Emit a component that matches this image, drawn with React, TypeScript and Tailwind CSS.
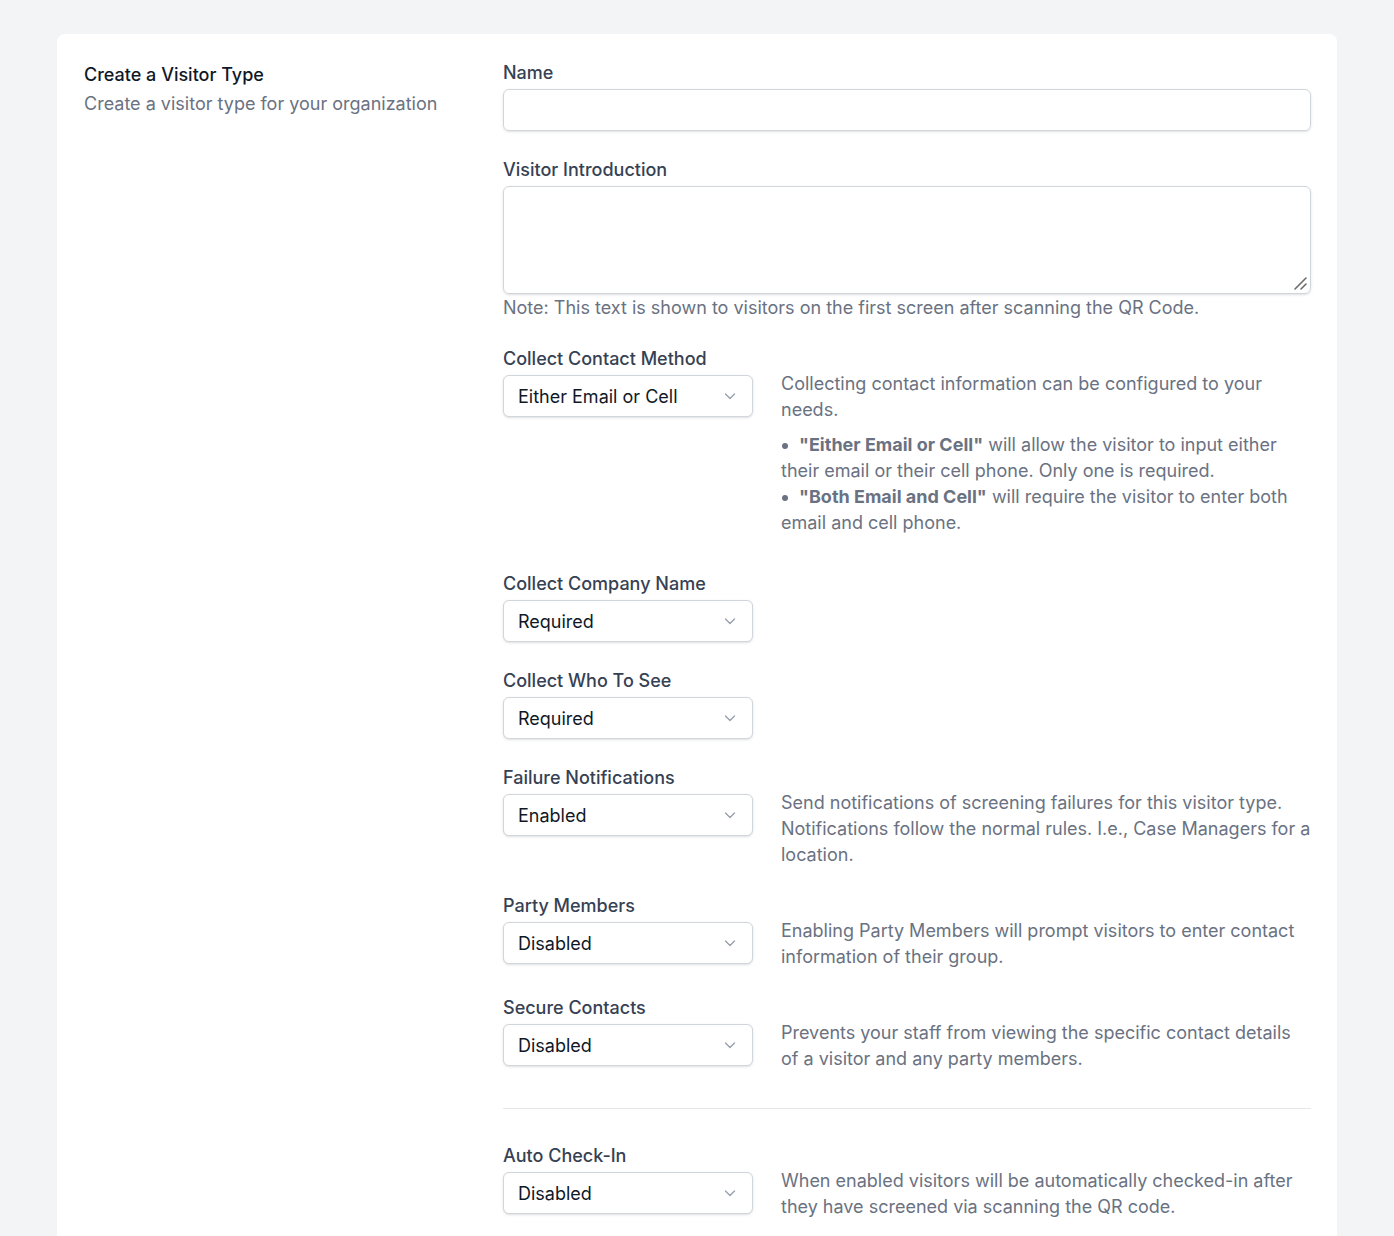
import React from "react";

function Chevron() {
  return (
    <svg width="20" height="20" viewBox="0 0 20 20" fill="none" className="text-gray-400">
      <path d="M5.5 8l4.5 4.5L14.5 8" stroke="currentColor" strokeWidth="1.4" strokeLinecap="round" strokeLinejoin="round" />
    </svg>
  );
}

function SelectBox({ value }: { value: string }) {
  return (
    <div className="mt-[2px] flex h-[42px] w-[250px] items-center justify-between rounded-md border border-gray-300 bg-white pl-[14px] pr-3 text-[18px] text-gray-900 shadow-sm">
      <span>{value}</span>
      <Chevron />
    </div>
  );
}

function Field({
  label,
  value,
  children,
}: {
  label: string;
  value: string;
  children?: React.ReactNode;
}) {
  return (
    <div className="flex">
      <div className="w-[250px] shrink-0">
        <div className="text-[18px] font-medium leading-[28px] text-gray-700">{label}</div>
        <SelectBox value={value} />
      </div>
      {children ? (
        <div className="-mb-px ml-7 flex-1 pt-[26px] text-[18px] leading-[26px] text-gray-500">{children}</div>
      ) : null}
    </div>
  );
}

function ResizeHandle() {
  return (
    <svg width="16" height="16" viewBox="0 0 16 16" className="pointer-events-none absolute bottom-[3px] right-[3px]">
      <path d="M3 14L14 3" stroke="#6b6b6b" strokeWidth="1.6" strokeLinecap="round" />
      <path d="M9 14L14 9" stroke="#6b6b6b" strokeWidth="1.6" strokeLinecap="round" />
    </svg>
  );
}

function Dot() {
  return <span className="mr-[11px] ml-px inline-block h-[6px] w-[6px] rounded-full bg-gray-500 align-middle" />;
}

export default function App() {
  return (
    <div className="min-h-screen bg-gray-100 pt-[34px] pb-10" style={{ fontFamily: "Inter, 'Noto Sans', sans-serif" }}>
      <div className="mx-auto max-w-[1280px] rounded-lg bg-white pl-[27px] pr-[26px] pt-[25px] pb-12">
        <div className="flex">
          <div className="w-[419px] shrink-0">
            <h2 className="mt-[3px] text-[18px] font-medium leading-[26px] text-gray-900">Create a Visitor Type</h2>
            <p className="mt-[3px] text-[18px] leading-[26px] text-gray-500">Create a visitor type for your organization</p>
          </div>
          <div className="flex flex-1 flex-col gap-[25px]">
            <div>
              <label className="block text-[18px] font-medium leading-[28px] text-gray-700">Name</label>
              <input
                type="text"
                className="mt-[2px] block h-[42px] w-full rounded-md border border-gray-300 px-3 text-[18px] shadow-sm outline-none"
              />
            </div>
            <div>
              <label className="block text-[18px] font-medium leading-[28px] text-gray-700">Visitor Introduction</label>
              <div className="relative mt-[2px]">
                <textarea className="block h-[108px] w-full resize-none rounded-md border border-gray-300 px-3 py-2 text-[18px] shadow-sm outline-none" />
                <ResizeHandle />
              </div>
              <p className="mt-[2px] text-[18px] leading-6 text-gray-500">
                Note: This text is shown to visitors on the first screen after scanning the QR Code.
              </p>
            </div>
            <div className="pb-[10px]">
              <Field label="Collect Contact Method" value="Either Email or Cell">
                <p>Collecting contact information can be configured to your needs.</p>
                <ul className="mt-[9px]">
                  <li>
                    <Dot />
                    <span className="font-bold">"Either Email or Cell"</span> will allow the visitor to input either their
                    email or their cell phone. Only one is required.
                  </li>
                  <li>
                    <Dot />
                    <span className="font-bold">"Both Email and Cell"</span> will require the visitor to enter both email and
                    cell phone.
                  </li>
                </ul>
              </Field>
            </div>
            <Field label="Collect Company Name" value="Required" />
            <Field label="Collect Who To See" value="Required" />
            <Field label="Failure Notifications" value="Enabled">
              Send notifications of screening failures for this visitor type. Notifications follow the normal rules. I.e., Case
              Managers for a location.
            </Field>
            <Field label="Party Members" value="Disabled">
              Enabling Party Members will prompt visitors to enter contact information of their group.
            </Field>
            <Field label="Secure Contacts" value="Disabled">
              Prevents your staff from viewing the specific contact details of a visitor and any party members.
            </Field>
            <div className="mt-3 mb-2 border-t border-gray-200" />
            <Field label="Auto Check-In" value="Disabled">
              When enabled visitors will be automatically checked-in after they have screened via scanning the QR code.
            </Field>
          </div>
        </div>
      </div>
    </div>
  );
}
